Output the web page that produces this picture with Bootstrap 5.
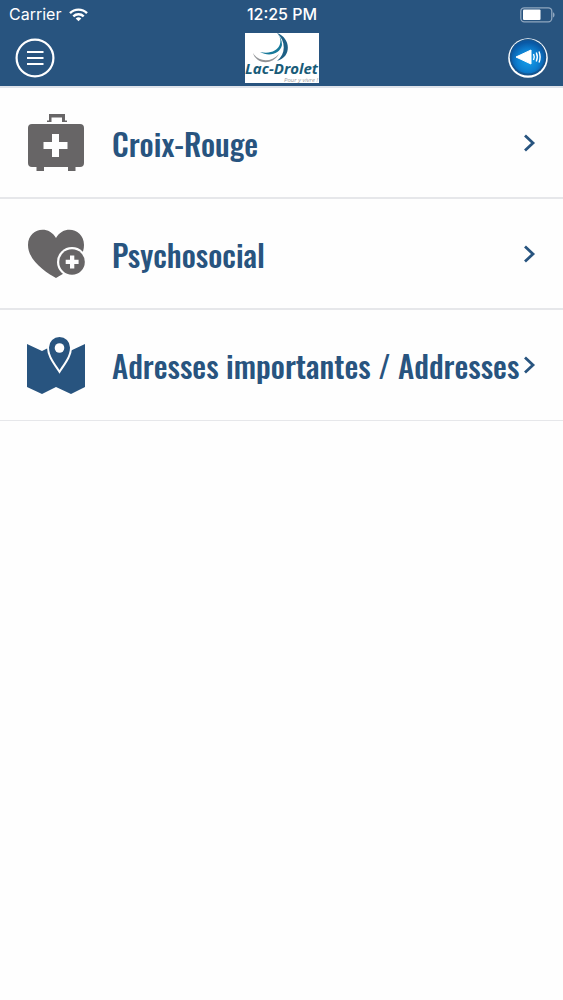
<!DOCTYPE html>
<html lang="fr">
<head>
<meta charset="utf-8">
<meta name="viewport" content="width=device-width, initial-scale=1">
<title>Lac-Drolet</title>
<link href="https://cdn.jsdelivr.net/npm/bootstrap@5.3.0/dist/css/bootstrap.min.css" rel="stylesheet">
<style>
  :root { --brand: #28547f; }
  body { font-family: Inter, "Liberation Sans", sans-serif; background: #fefefe; }
  .app-header { background: var(--brand); border-bottom: 2px solid #dfe3ea; }
  .status-line { height: 29px; font-size: 16px; line-height: 29px; padding: 0 8px 0 9px; }
  .status-line .col { flex-basis: 0; }
  .clock { font-weight: 500; }
  .tool-line { height: 57px; padding: 0 15px; }
  .round-btn { width: 40px; height: 40px; }
  .logo-link { width: 74px; height: 50px; }
  .menu-row { height: 111px; padding: 0 27px; border-bottom: 2px solid #e6e7ea; color: var(--brand); }
  .menu-row:last-child { border-bottom-width: 1px; }
  .menu-row:hover { color: var(--brand); background: #f6f8fa; }
  .menu-label { font-family: Oswald, "Liberation Sans Narrow", "Roboto Condensed", sans-serif; font-weight: 500; font-size: 31px; line-height: 40px; min-width: 0; margin-left: 27px; }
  svg { display: block; flex: none; }
</style>
</head>
<body>
<header class="app-header text-white">
  <div class="status-line d-flex align-items-center">
    <div class="col d-flex align-items-center gap-2">
      <span>Carrier</span>
      <svg width="19" height="14" viewBox="0 0 19 14" fill="none" stroke="#fff" stroke-width="2.4" aria-hidden="true">
        <path d="M1 5.2a12 12 0 0 1 17 0M4.3 8.4a7.4 7.4 0 0 1 10.400 0"/>
        <path d="M9.500 13.300 6.700 10.500a4 4 0 0 1 5.600 0z" fill="#fff" stroke="none"/>
      </svg>
    </div>
    <div class="clock">12:25 PM</div>
    <div class="col d-flex justify-content-end">
      <svg width="35" height="16" viewBox="0 0 35 16" role="img" aria-label="Batterie">
        <rect x=".8" y=".8" width="31" height="14" rx="3.500" fill="none" stroke="#8fa6bf" stroke-width="1.300"/>
        <rect x="3" y="2.500" width="17.500" height="10.600" rx="1" fill="#fff"/>
        <path d="M33 5.200c2 .8 2 4.400 0 5.200z" fill="#8fa6bf"/>
      </svg>
    </div>
  </div>
  <nav class="tool-line d-flex align-items-center justify-content-between" aria-label="Principale">
    <button type="button" class="round-btn btn p-0 border-0 rounded-circle" aria-label="Menu">
      <svg width="40" height="40" viewBox="0 0 40 40" fill="none" stroke="#fff" stroke-width="2.200" aria-hidden="true">
        <circle cx="20" cy="20" r="18.400"/>
        <path d="M12 14h16.500M12 20h16.500M12 26h16.500"/>
      </svg>
    </button>
    <a href="#" class="logo-link" aria-label="Lac-Drolet, accueil">
      <svg width="74" height="50" viewBox="0 0 74 50">
        <rect width="74" height="50" fill="#fff"/>
        <path d="M32 0C46 5 47 24 32 28 41 21 41 8 32 0z" fill="#1d5f85"/>
        <path d="M32 0C40 8 34 23 15 19 24 24 35 21 37 12 37 7 35 3 32 0z" fill="#17799a"/>
        <path d="M8 20C13 29 26 30 34 21 27 33 11 31 8 20z" fill="#929497"/>
        <text x="0" y="41" font-family="Open Sans, sans-serif" font-size="15" font-weight="700" font-style="italic" fill="#195b78">Lac-Drolet</text>
        <text x="39" y="49" font-family="Open Sans, sans-serif" font-size="6" font-style="italic" fill="#9b9b9b">Pour y vivre !</text>
      </svg>
    </a>
    <button type="button" class="round-btn btn p-0 border-0 rounded-circle" aria-label="Écouter">
      <svg width="40" height="40" viewBox="0 0 40 40" aria-hidden="true">
        <defs>
          <radialGradient id="glow" cx=".5" cy=".6" r=".55"><stop offset="0" stop-color="#16a0ec"/><stop offset=".6" stop-color="#0d7fd0"/><stop offset="1" stop-color="#0a58a4"/></radialGradient>
        </defs>
        <circle cx="20" cy="20" r="19.800" fill="#fff"/>
        <circle cx="20" cy="19.300" r="18.300" fill="#155590"/>
        <circle cx="20" cy="19" r="16.500" fill="url(#glow)"/>
        <path d="M8 19 23 12v14z" fill="#fff" stroke="#fff" stroke-linejoin="round"/>
        <path d="M25.500 16q1.500 3 0 6M28.300 14.500q2 4.500 0 9M31 13.500q2.200 5.500 0 11" fill="none" stroke="#fff" stroke-width="1.400"/>
      </svg>
    </button>
  </nav>
</header>
<main>
  <div class="d-flex flex-column">
    <a href="#" class="menu-row d-flex align-items-center text-decoration-none">
      <svg width="58" height="58" viewBox="0 0 58 58" fill="#676566" aria-hidden="true">
        <path d="M20 8V6.500h2V0h16v6.500h2V8h-5V3.500H24.500V8z"/>
        <path fill-rule="evenodd" d="M5 10h48a4 4 0 0 1 4 4v35a4 4 0 0 1-4 4h-4.500v4H41v-4H17v4H9.500v-4H5a4 4 0 0 1-4-4V14a4 4 0 0 1 4-4zm20 10v8h-8.500v7H25v8h7v-8h8.500v-7H32v-8z"/>
      </svg>
      <span class="menu-label flex-grow-1 text-nowrap">Croix-Rouge</span>
      <svg width="12" height="18" viewBox="0 0 12 18" fill="none" stroke="#28547f" stroke-width="2.800" aria-hidden="true"><path d="M1 1.500 9 9 1 16.500"/></svg>
    </a>
    <a href="#" class="menu-row d-flex align-items-center text-decoration-none">
      <svg width="58" height="58" viewBox="0 0 58 58" aria-hidden="true">
        <path fill="#676566" d="M29 53C20 48 1 36 1 20 1 4 21-1 29 13 37-1 57 4 57 20 57 36 38 48 29 53z"/>
        <circle cx="45" cy="37" r="15" fill="#fefefe"/>
        <circle cx="45" cy="37" r="12.800" fill="#676566"/>
        <path fill="#fefefe" d="M43 30.500h4.300v4.300h4.300v4.300h-4.300v4.300H43v-4.300h-4.300v-4.300H43z"/>
      </svg>
      <span class="menu-label flex-grow-1 text-nowrap">Psychosocial</span>
      <svg width="12" height="18" viewBox="0 0 12 18" fill="none" stroke="#28547f" stroke-width="2.800" aria-hidden="true"><path d="M1 1.500 9 9 1 16.500"/></svg>
    </a>
    <a href="#" class="menu-row d-flex align-items-center text-decoration-none">
      <svg width="58" height="58" viewBox="0 0 58 58" aria-hidden="true">
        <path fill="#28547f" d="M0 8l15 7 14-7 14 7 15-7v43l-14 7-15-7-14 7-15-7z"/>
        <path fill="#28547f" stroke="#fefefe" stroke-width="4" paint-order="stroke" d="M32.500 34C28 27 22 20 22 11.500a10.500 10.500 0 0 1 21 0C43 20 37 27 32.500 34z"/>
        <circle cx="32.500" cy="12" r="4.800" fill="#fefefe"/>
      </svg>
      <span class="menu-label flex-grow-1 text-nowrap">Adresses importantes / Addresses</span>
      <svg width="12" height="18" viewBox="0 0 12 18" fill="none" stroke="#28547f" stroke-width="2.800" aria-hidden="true"><path d="M1 1.500 9 9 1 16.500"/></svg>
    </a>
  </div>
</main>
<script src="https://cdn.jsdelivr.net/npm/bootstrap@5.3.0/dist/js/bootstrap.bundle.min.js"></script>
</body>
</html>
